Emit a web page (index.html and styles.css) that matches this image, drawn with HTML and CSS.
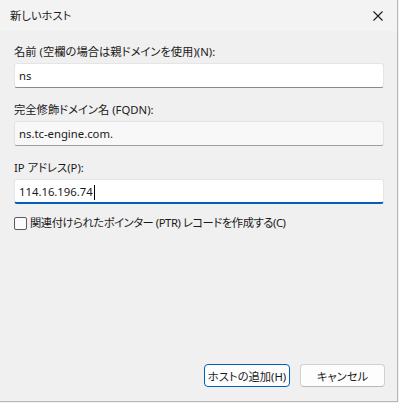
FILE: index.html
```html
<!DOCTYPE html>
<html lang="ja">
<head>
    <meta charset="UTF-8">
    <title>新しいホスト</title>
    <link rel="stylesheet" href="styles.css">
</head>
<body>
    <div class="window">
        <!-- Title bar -->
        <div class="titlebar">
            <span class="title">新しいホスト</span>
            <svg class="close" width="10" height="10" viewBox="0 0 10 10">
                <path d="M0.5 0.5 L9.5 9.5 M9.5 0.5 L0.5 9.5" stroke="#1a1a1a" stroke-width="1.1" fill="none"/>
            </svg>
        </div>

        <div class="content">
            <div class="field">
                <label for="host-name">名前 (空欄の場合は親ドメインを使用)(N):</label>
                <div class="input" id="host-name">ns</div>
            </div>

            <div class="field">
                <label>完全修飾ドメイン名 (FQDN):</label>
                <div class="input readonly">ns.tc-engine.com.</div>
            </div>

            <div class="field">
                <label for="ip-address">IP アドレス(P):</label>
                <div class="input focused" id="ip-address">114.16.196.74<span class="caret"></span></div>
            </div>

            <div class="check-row">
                <span class="checkbox"></span>
                <span class="check-label">関連付けられたポインター (PTR) レコードを作成する(C)</span>
            </div>
        </div>

        <div class="buttons">
            <button class="btn default">ホストの追加(H)</button>
            <button class="btn">キャンセル</button>
        </div>
    </div>
</body>
</html>
```

FILE: styles.css
```css
body {
    margin: 0;
    padding: 0;
    background-color: #f0f0f0;
    font-family: "Noto Sans", "Noto Sans CJK JP", sans-serif;
    font-size: 11.3px;
    color: #1a1a1a;
    font-feature-settings: "palt";
}

.window {
    width: 397px;
    height: 401px;
    border-right: 1px solid #b9b9b9;
    border-bottom: 1px solid #b9b9b9;
    background-color: #f0f0f0;
    display: flex;
    flex-direction: column;
}

.titlebar {
    height: 31px;
    background-color: #f3f3f3;
    display: flex;
    align-items: center;
    justify-content: space-between;
    padding: 0 10px 0 10px;
}

.title {
    line-height: 16px;
}

.close {
    margin-right: 4px;
}

.content {
    padding: 13px 13px 0 14px;
    flex: 1;
}

.field {
    margin-bottom: 14px;
}

.field label {
    display: block;
    line-height: 16px;
    margin-bottom: 3px;
}

.input {
    height: 25px;
    line-height: 24px;
    background-color: #fff;
    border: 1px solid #e5e5e5;
    border-bottom-color: #8a8a8a;
    border-radius: 3px;
    padding: 0 4px;
    box-sizing: border-box;
}

.input.readonly {
    background-color: #f8f8f8;
    border-color: #e3e3e3;
    border-bottom-color: #a0a0a0;
}

.input.focused {
    border-bottom: 2px solid #005fb8;
    line-height: 23px;
}

.caret {
    display: inline-block;
    width: 1px;
    height: 15px;
    background-color: #000;
    vertical-align: middle;
    margin-left: 1px;
}

.check-row {
    display: flex;
    align-items: center;
    gap: 3px;
    margin-top: -3px;
    line-height: 16px;
}

.check-label {
    letter-spacing: -0.45px;
}

.checkbox {
    width: 11px;
    height: 11px;
    border: 1px solid #5c5c5c;
    border-radius: 2px;
    background-color: #fbfbfb;
}

.buttons {
    display: flex;
    justify-content: flex-end;
    gap: 10px;
    padding: 0 12px 14px 0;
}

.btn {
    font-family: inherit;
    font-size: 11.3px;
    font-feature-settings: "palt";
    width: 85px;
    height: 23px;
    padding: 0;
    background-color: #fdfdfd;
    border: 1px solid #d0d0d0;
    border-bottom-color: #b8b8b8;
    border-radius: 4px;
    color: #1a1a1a;
}

.btn.default {
    border: 1px solid #005fb8;
    width: 86px;
}
```
